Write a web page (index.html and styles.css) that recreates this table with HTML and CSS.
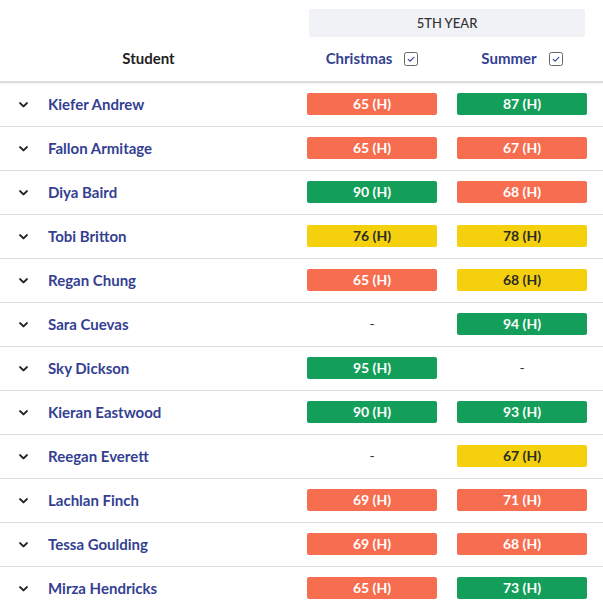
FILE: index.html
```html
<!DOCTYPE html>
<html>
<head>
<meta charset="utf-8">
<link rel="stylesheet" href="styles.css">
</head>
<body>
<div class="sheet">
  <div class="head">
    <div class="band">
      <div class="band-spacer"></div>
      <div class="year">5TH YEAR</div>
      <div class="edge"></div>
    </div>
    <div class="cols">
      <div class="h-student">Student</div>
      <div class="h-term"><span>Christmas</span><span class="check"><svg viewBox="0 0 14 14" width="14" height="14"><rect x="0.5" y="0.5" width="13" height="13" rx="2" fill="#fff" stroke="#666"/><path d="M4.2 7.4 L6.1 9.1 L9.8 5.3" fill="none" stroke="#3a4596" stroke-width="1.2" stroke-linecap="round" stroke-linejoin="round"/></svg></span></div>
      <div class="h-term"><span>Summer</span><span class="check"><svg viewBox="0 0 14 14" width="14" height="14"><rect x="0.5" y="0.5" width="13" height="13" rx="2" fill="#fff" stroke="#666"/><path d="M4.2 7.4 L6.1 9.1 L9.8 5.3" fill="none" stroke="#3a4596" stroke-width="1.2" stroke-linecap="round" stroke-linejoin="round"/></svg></span></div>
      <div class="edge"></div>
    </div>
  </div>
  <div class="rows" id="rows"></div>
</div>
<script>
var data = [
  ["Kiefer Andrew", [65,"r"], [87,"g"]],
  ["Fallon Armitage", [65,"r"], [67,"r"]],
  ["Diya Baird", [90,"g"], [68,"r"]],
  ["Tobi Britton", [76,"y"], [78,"y"]],
  ["Regan Chung", [65,"r"], [68,"y"]],
  ["Sara Cuevas", null, [94,"g"]],
  ["Sky Dickson", [95,"g"], null],
  ["Kieran Eastwood", [90,"g"], [93,"g"]],
  ["Reegan Everett", null, [67,"y"]],
  ["Lachlan Finch", [69,"r"], [71,"r"]],
  ["Tessa Goulding", [69,"r"], [68,"r"]],
  ["Mirza Hendricks", [65,"r"], [73,"g"]]
];
var chev = '<svg viewBox="0 0 9 6" width="9" height="6"><path d="M1.1 1.1 L4.5 4.4 L7.9 1.1" fill="none" stroke="#222" stroke-width="2" stroke-linecap="round" stroke-linejoin="round"/></svg>';
function cell(v){
  if(!v) return '<div class="cell"><span class="dash">-</span></div>';
  return '<div class="cell"><span class="pill ' + v[1] + '">' + v[0] + ' (H)</span></div>';
}
var html = '';
data.forEach(function(d){
  html += '<div class="row"><div class="exp">' + chev + '</div><div class="name">' + d[0] + '</div>' + cell(d[1]) + cell(d[2]) + '<div class="edge"></div></div>';
});
document.getElementById('rows').innerHTML = html;
</script>
</body>
</html>
```
FILE: styles.css
```css
html, body {
  margin: 0;
  padding: 0;
  background: #fff;
  overflow: hidden;
}
body {
  font-family: "Lato", "Noto Sans", sans-serif;
  color: #222;
}
.sheet {
  width: 603px;
}
.head {
  border-bottom: 2px solid #dcdcdc;
  box-shadow: 0 1px 2px rgba(0,0,0,0.06);
}
.band {
  display: flex;
  padding-top: 9px;
}
.band-spacer {
  width: 309px;
}
.year {
  width: 276px;
  height: 28px;
  background: #f1f2f6;
  border-radius: 2px;
  display: flex;
  align-items: center;
  justify-content: center;
  font-size: 13px;
  font-weight: 500;
  color: #333;
}
.edge {
  flex: 1;
}
.cols {
  display: flex;
  height: 44px;
  align-items: center;
  padding-bottom: 2px;
  box-sizing: border-box;
}
.h-student {
  width: 297px;
  text-align: center;
  font-size: 15px;
  font-weight: 700;
  color: #222;
}
.h-term {
  width: 150px;
  display: flex;
  align-items: center;
  justify-content: center;
  gap: 12px;
  font-size: 15px;
  font-weight: 700;
  color: #343f92;
}
.check {
  display: flex;
  margin-top: 2px;
}
.row {
  display: flex;
  align-items: center;
  height: 43px;
  border-bottom: 1px solid #dddddd;
}
.exp {
  width: 48px;
  display: flex;
  justify-content: flex-start;
  padding-left: 19px;
  box-sizing: border-box;
}
.exp svg {
  display: block;
}
.name {
  width: 249px;
  font-size: 15px;
  font-weight: 700;
  color: #343f92;
  padding-bottom: 2px;
}
.cell {
  width: 150px;
  display: flex;
  justify-content: center;
}
.pill {
  width: 130px;
  height: 22px;
  border-radius: 2px;
  display: flex;
  align-items: center;
  justify-content: center;
  font-size: 14px;
  font-weight: 700;
  color: #fff;
  padding-bottom: 1px;
  box-sizing: border-box;
  margin-bottom: 1px;
}
.pill.r { background: #f76d4f; }
.pill.g { background: #139e5a; }
.pill.y { background: #f4d10c; color: #2a2a2a; }
.dash {
  font-size: 14px;
  color: #333;
  padding-bottom: 2px;
}
```
